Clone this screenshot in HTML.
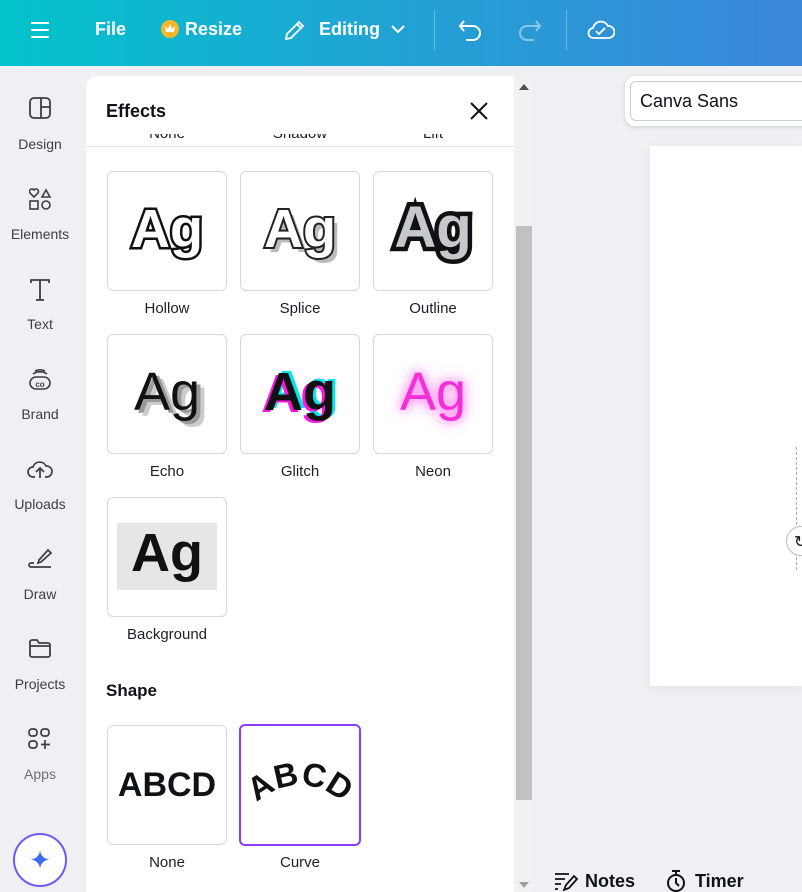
<!DOCTYPE html>
<html><head><style>
*{box-sizing:border-box;margin:0;padding:0}
body{width:802px;height:892px;overflow:hidden;background:#eef0f4;font-family:"Liberation Sans",sans-serif;position:relative;color:#0e1318}
.top{position:absolute;left:0;top:0;width:802px;height:66px;background:linear-gradient(90deg,#02c3cc,#1fa5d4 45%,#3a86d9);color:#fff}
.top .t{position:absolute;top:19px;font-size:18px;font-weight:bold}
.side{position:absolute;left:0;top:66px;width:80px}
.si{position:absolute;left:0;width:80px;text-align:center;font-size:14px;color:#3b3f45}
.panel{position:absolute;left:86px;top:76px;width:428px;height:816px;background:#fff;border-radius:12px 0 0 0;overflow:hidden}
.card{position:absolute;width:120px;height:120px;border:1px solid #d6d8dc;border-radius:6px;background:#fff;overflow:hidden}
.lab{position:absolute;width:120px;text-align:center;font-size:15px;color:#1b1f24}
.ag{position:absolute;left:0;width:118px;text-align:center;top:26px;font-size:54px;font-weight:bold;letter-spacing:0;paint-order:stroke fill}
</style></head><body>
<div class="top">
 <svg style="position:absolute;left:30px;top:20px" width="20" height="20" stroke="#fff" stroke-width="2"><path d="M1 3h18M1 10h18M1 17h18"/></svg>
 <div class="t" style="left:95px">File</div>
 <div style="position:absolute;left:161px;top:20px;width:18px;height:18px;border-radius:50%;background:#f6b72b"></div>
 <svg style="position:absolute;left:164px;top:23px" width="12" height="11" fill="#fff"><path d="M1 3l3 3 2-5 2 5 3-3-1 6H2z"/></svg>
 <div class="t" style="left:185px">Resize</div>
 <svg style="position:absolute;left:283px;top:18px" width="24" height="24" fill="none" stroke="#fff" stroke-width="1.8"><path d="M3 21l1-5L16 4l4 4L8 20z M14 6l4 4"/></svg>
 <div class="t" style="left:319px">Editing</div>
 <svg style="position:absolute;left:391px;top:24px" width="14" height="10" fill="none" stroke="#fff" stroke-width="2"><path d="M1 2l6 6 6-6"/></svg>
 <div style="position:absolute;left:434px;top:10px;width:1px;height:40px;background:rgba(255,255,255,.3)"></div>
 <svg style="position:absolute;left:458px;top:18px" width="26" height="24" fill="none" stroke="#fff" stroke-width="2"><path d="M6 3L2 8l4 5M2 8h13a7 7 0 010 14H8"/></svg>
 <svg style="position:absolute;left:516px;top:18px" width="26" height="24" fill="none" stroke="rgba(255,255,255,.45)" stroke-width="2"><path d="M20 3l4 5-4 5M24 8H11a7 7 0 000 14h7"/></svg>
 <div style="position:absolute;left:566px;top:10px;width:1px;height:40px;background:rgba(255,255,255,.3)"></div>
 <svg style="position:absolute;left:587px;top:16px" width="28" height="26" fill="none" stroke="#fff" stroke-width="1.8"><path d="M7 22a5 5 0 01-1-10 8 8 0 0115-2 6 6 0 011 12z M9 15l3 3 6-6"/></svg>
</div>
<div class="side">
 <svg style="position:absolute;left:29px;top:31px" width="22" height="22" fill="none" stroke="#3b3f45" stroke-width="1.8"><rect x="1" y="1" width="20" height="20" rx="4"/><path d="M12 1v20M12 10h9"/></svg>
 <div class="si" style="top:70px">Design</div>
 <svg style="position:absolute;left:29px;top:122px" width="22" height="22" fill="none" stroke="#3b3f45" stroke-width="1.6"><path d="M5 9L1 5a2.5 2.5 0 014-3 2.5 2.5 0 014 3z M13 9l4-7 4 7z"/><rect x="1" y="13" width="8" height="8"/><circle cx="17" cy="17" r="4"/></svg>
 <div class="si" style="top:160px">Elements</div>
 <svg style="position:absolute;left:30px;top:213px" width="20" height="22" fill="none" stroke="#3b3f45" stroke-width="1.8"><path d="M1 4V1h18v3M10 1v20M6 21h8"/></svg>
 <div class="si" style="top:250px">Text</div>
 <svg style="position:absolute;left:28px;top:300px" width="24" height="26" fill="none" stroke="#3b3f45" stroke-width="1.6"><path d="M5 8a9 6 0 0114 0M7 5a7 4 0 0110 0"/><rect x="2" y="11" width="20" height="12" rx="6"/><text x="12" y="21" font-size="8" text-anchor="middle" fill="#3b3f45" stroke="none" font-weight="bold">co</text></svg>
 <div class="si" style="top:340px">Brand</div>
 <svg style="position:absolute;left:27px;top:392px" width="26" height="22" fill="none" stroke="#3b3f45" stroke-width="1.7"><path d="M8 19H6a5 5 0 010-10 7 7 0 0113-1 5 5 0 011 11h-2M13 20v-9M9 14l4-4 4 4"/></svg>
 <div class="si" style="top:430px">Uploads</div>
 <svg style="position:absolute;left:28px;top:480px" width="26" height="24" fill="none" stroke="#3b3f45" stroke-width="1.7"><path d="M11 14l9-10 3 3-10 9-3 1z M6 17H3a2 2 0 000 4h20"/></svg>
 <div class="si" style="top:520px">Draw</div>
 <svg style="position:absolute;left:29px;top:572px" width="22" height="20" fill="none" stroke="#3b3f45" stroke-width="1.8"><path d="M1 4a2 2 0 012-2h5l2 3h9a2 2 0 012 2v10a2 2 0 01-2 2H3a2 2 0 01-2-2z M1 8h20"/></svg>
 <div class="si" style="top:610px">Projects</div>
 <svg style="position:absolute;left:28px;top:662px" width="24" height="22" fill="none" stroke="#3b3f45" stroke-width="1.7"><rect x="1" y="1" width="8" height="7" rx="3"/><rect x="13" y="1" width="8" height="7" rx="3"/><rect x="1" y="13" width="8" height="7" rx="3"/><path d="M17 12v9M13 16.5h9"/></svg>
 <div class="si" style="top:700px;color:#6b6f75">Apps</div>
 <div style="position:absolute;left:13px;top:767px;width:54px;height:54px;border-radius:50%;border:2px solid #6a5cf0;background:#fff;text-align:center;line-height:50px;font-size:26px;color:#3b6df0">✦</div>
</div>
<div class="panel">
 <div style="position:absolute;left:20px;top:25px;font-size:18px;font-weight:bold">Effects</div>
 <svg style="position:absolute;left:384px;top:26px" width="18" height="18" stroke="#0e1318" stroke-width="2"><path d="M1 1l16 16M17 1L1 17"/></svg>
 <div style="position:absolute;left:0;top:58px;width:428px;height:12px;overflow:hidden;font-size:15px;color:#1b1f24">
  <div style="position:absolute;left:21px;top:-9px;width:120px;text-align:center">None</div>
  <div style="position:absolute;left:154px;top:-9px;width:120px;text-align:center">Shadow</div>
  <div style="position:absolute;left:287px;top:-9px;width:120px;text-align:center">Lift</div>
 </div>
 <div style="position:absolute;left:0;top:70px;width:428px;height:1px;background:#dfe1e5"></div>

 <div class="card" style="left:21px;top:95px"><div class="ag" style="color:#fff;-webkit-text-stroke:5px #111">Ag</div></div>
 <div class="lab" style="left:21px;top:224px">Hollow</div>
 <div class="card" style="left:154px;top:95px"><div class="ag" style="color:#bbb;left:5px;top:31px">Ag</div><div class="ag" style="color:#fff;-webkit-text-stroke:4px #222">Ag</div></div>
 <div class="lab" style="left:154px;top:224px">Splice</div>
 <div class="card" style="left:287px;top:95px"><div class="ag" style="color:#c5c8cc;-webkit-text-stroke:9px #111;font-size:58px;top:22px">Ag</div></div>
 <div class="lab" style="left:287px;top:224px">Outline</div>

 <div class="card" style="left:21px;top:258px"><div class="ag" style="font-weight:normal;color:#ccc;left:8px;top:32px">Ag</div><div class="ag" style="font-weight:normal;color:#999;left:4px;top:29px">Ag</div><div class="ag" style="font-weight:normal;color:#111">Ag</div></div>
 <div class="lab" style="left:21px;top:387px">Echo</div>
 <div class="card" style="left:154px;top:258px"><div class="ag" style="color:#00e5ee;left:3px;top:24px">Ag</div><div class="ag" style="color:#ff14e0;left:-3px;top:28px">Ag</div><div class="ag" style="color:#111">Ag</div></div>
 <div class="lab" style="left:154px;top:387px">Glitch</div>
 <div class="card" style="left:287px;top:258px"><div class="ag" style="font-weight:normal;color:#f42fd8;text-shadow:0 0 10px #ff5ce8,0 0 20px #ffb0f2">Ag</div></div>
 <div class="lab" style="left:287px;top:387px">Neon</div>

 <div class="card" style="left:21px;top:421px"><div style="position:absolute;left:9px;top:25px;width:100px;height:67px;background:#e6e6e6"></div><div class="ag" style="color:#111;top:24px">Ag</div></div>
 <div class="lab" style="left:21px;top:550px">Background</div>

 <div style="position:absolute;left:20px;top:605px;font-size:17px;font-weight:bold">Shape</div>
 <div class="card" style="left:21px;top:649px"><div style="position:absolute;width:118px;text-align:center;top:40px;font-size:34px;font-weight:bold">ABCD</div></div>
 <div class="lab" style="left:21px;top:778px">None</div>
 <div class="card" style="left:153px;top:648px;width:122px;height:122px;border:2px solid #8b3dff"><svg width="118" height="118"><defs><path id="c" d="M14 78 Q59 40 104 78"/></defs><text font-size="33" font-weight="bold" font-family="Liberation Sans" fill="#111"><textPath href="#c" startOffset="50%" text-anchor="middle">ABCD</textPath></text></svg></div>
 <div class="lab" style="left:154px;top:778px">Curve</div>
</div>
<div style="position:absolute;left:514px;top:76px;width:20px;height:816px;background:#f1f1f1"></div>
<div style="position:absolute;left:516px;top:226px;width:16px;height:574px;background:#c1c1c1"></div>
<div style="position:absolute;left:519px;top:84px;border:5px solid transparent;border-bottom:6px solid #505050;border-top:0"></div>
<div style="position:absolute;left:519px;top:882px;border:5px solid transparent;border-top:6px solid #a0a0a0;border-bottom:0"></div>

<div style="position:absolute;left:625px;top:76px;width:190px;height:50px;background:#fff;border-radius:10px;box-shadow:0 1px 4px rgba(0,0,0,.15)"></div>
<div style="position:absolute;left:630px;top:81px;width:180px;height:40px;border:1px solid #c9ccd1;border-radius:6px;font-size:18px;padding:9px 0 0 9px">Canva Sans</div>
<div style="position:absolute;left:650px;top:146px;width:152px;height:540px;background:#fff;box-shadow:0 2px 10px rgba(0,0,0,.06)"></div>
<div style="position:absolute;left:796px;top:447px;height:123px;border-left:1px dashed #aab"></div>
<div style="position:absolute;left:786px;top:526px;width:30px;height:30px;border-radius:50%;border:1px solid #bbb;background:#fff;font-size:16px;padding:5px 0 0 7px">↻</div>

<svg style="position:absolute;left:554px;top:871px" width="24" height="20" fill="none" stroke="#0e1318" stroke-width="1.8"><path d="M1 3h14M1 8h10M1 13h6M1 18h3M10 19l2-5 8-9 3 3-8 9z"/></svg>
<div style="position:absolute;left:585px;top:871px;font-size:18px;font-weight:bold">Notes</div>
<svg style="position:absolute;left:665px;top:869px" width="22" height="23" fill="none" stroke="#0e1318" stroke-width="2"><path d="M7 2h8M11 2v3"/><circle cx="11" cy="14" r="8"/><path d="M11 9v5l3 3"/></svg>
<div style="position:absolute;left:695px;top:871px;font-size:18px;font-weight:bold">Timer</div>
</body></html>
